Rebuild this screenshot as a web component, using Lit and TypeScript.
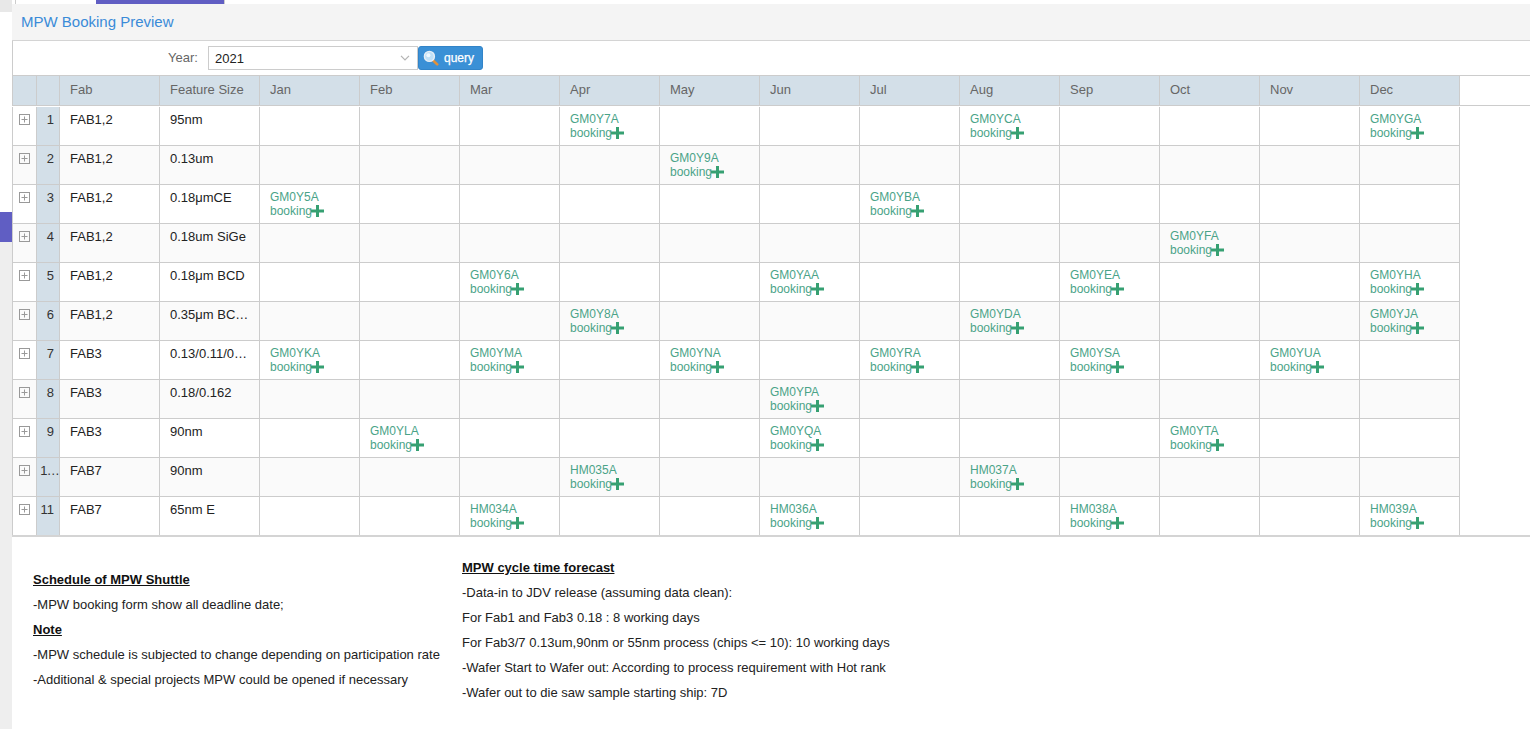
import { LitElement, html, css, svg } from "lit";
import { customElement } from "lit/decorators.js";

const MONTHS = ["Jan", "Feb", "Mar", "Apr", "May", "Jun", "Jul", "Aug", "Sep", "Oct", "Nov", "Dec"];

interface Row {
  no: string;
  fab: string;
  size: string;
  codes: Record<string, string>;
}

const ROWS: Row[] = [
  { no: "1", fab: "FAB1,2", size: "95nm", codes: { Apr: "GM0Y7A", Aug: "GM0YCA", Dec: "GM0YGA" } },
  { no: "2", fab: "FAB1,2", size: "0.13um", codes: { May: "GM0Y9A" } },
  { no: "3", fab: "FAB1,2", size: "0.18μmCE", codes: { Jan: "GM0Y5A", Jul: "GM0YBA" } },
  { no: "4", fab: "FAB1,2", size: "0.18um SiGe", codes: { Oct: "GM0YFA" } },
  { no: "5", fab: "FAB1,2", size: "0.18μm BCD", codes: { Mar: "GM0Y6A", Jun: "GM0YAA", Sep: "GM0YEA", Dec: "GM0YHA" } },
  { no: "6", fab: "FAB1,2", size: "0.35μm BC…", codes: { Apr: "GM0Y8A", Aug: "GM0YDA", Dec: "GM0YJA" } },
  { no: "7", fab: "FAB3", size: "0.13/0.11/0…", codes: { Jan: "GM0YKA", Mar: "GM0YMA", May: "GM0YNA", Jul: "GM0YRA", Sep: "GM0YSA", Nov: "GM0YUA" } },
  { no: "8", fab: "FAB3", size: "0.18/0.162", codes: { Jun: "GM0YPA" } },
  { no: "9", fab: "FAB3", size: "90nm", codes: { Feb: "GM0YLA", Jun: "GM0YQA", Oct: "GM0YTA" } },
  { no: "1…", fab: "FAB7", size: "90nm", codes: { Apr: "HM035A", Aug: "HM037A" } },
  { no: "11", fab: "FAB7", size: "65nm E", codes: { Mar: "HM034A", Jun: "HM036A", Sep: "HM038A", Dec: "HM039A" } },
];

const expander = svg`<svg class="exp" width="12" height="12" viewBox="0 0 12 12"><rect x="0.5" y="0.5" width="10" height="10" fill="none" stroke="#999"/><path d="M2.5 5.5h6M5.5 2.5v6" stroke="#999" fill="none"/></svg>`;
const plus = svg`<svg class="plus" width="13" height="12" viewBox="0 0 13 12"><path d="M5 0h3v4.5h5v3H8V12H5V7.5H0v-3h5z" fill="#36a072"/></svg>`;
const chevron = svg`<svg width="10" height="6" viewBox="0 0 10 6"><path d="M1 .8 5 5 9 .8" fill="none" stroke="#b4b4b4" stroke-width="1.2"/></svg>`;
const lens = svg`<svg width="16" height="16" viewBox="0 0 16 16"><path d="M9.6 9.8 14.2 14.4" stroke="#e0913a" stroke-width="2.6" stroke-linecap="round"/><circle cx="6.4" cy="6.4" r="5" fill="#bfe0f7" stroke="#e6eef5" stroke-width="1.4"/><circle cx="5.4" cy="5.2" r="2" fill="#eef8ff"/></svg>`;

@customElement("app-root")
export class AppRoot extends LitElement {
  static styles = css`
    :host {
      display: flex;
      width: 100%;
      height: 729px;
      overflow: hidden;
      background: #fff;
      font-family: "Liberation Sans", Arial, sans-serif;
      font-size: 13px;
      color: #333;
    }
    .side {
      width: 12px;
      flex: none;
      display: flex;
      flex-direction: column;
    }
    .side-top { height: 12px; background: #e8e8e8; }
    .side-gap { height: 200px; background: #fff; }
    .side-mark { height: 30px; background: #605ec3; }
    .side-rest { flex: 1; background: #eee; }
    .main { flex: 1; min-width: 0; display: flex; flex-direction: column; }
    .tabs { height: 4px; flex: none; display: flex; padding-left: 3px; background: #fff; }
    .tab-a { width: 80px; border-left: 1px solid #ccc; }
    .tab-b { width: 128px; background: #605ec3; border-right: 1px solid #ccc; }
    .title {
      height: 37px;
      flex: none;
      box-sizing: border-box;
      background: #f4f4f4;
      border-bottom: 1px solid #d4d4d4;
      padding-left: 9px;
      font-size: 15px;
      line-height: 36px;
      color: #3a8bd8;
    }
    .bar {
      height: 34px;
      flex: none;
      box-sizing: border-box;
      border-left: 1px solid #ccc;
      display: flex;
      align-items: flex-start;
      padding: 5px 0 0 155px;
    }
    .bar label { color: #666; line-height: 24px; width: 40px; }
    .combo {
      box-sizing: border-box;
      width: 210px;
      height: 24px;
      border: 1px solid #ccc;
      display: flex;
      align-items: center;
      justify-content: space-between;
      padding: 0 7px 0 6px;
      color: #222;
    }
    .btn {
      box-sizing: border-box;
      width: 65px;
      height: 24px;
      border-radius: 3px;
      background: #3a90d6;
      border: 1px solid #3284c8;
      display: flex;
      align-items: center;
      gap: 5px;
      padding-left: 4px;
      color: #fff;
      font-size: 12px;
      -webkit-text-stroke: 0.25px #fff;
    }
    .btn svg { flex: none; }
    .table { flex: none; border-bottom: 2px solid #d4d4d4; border-top: 1px solid #ccc; }
    .grid {
      display: grid;
      grid-template-columns: 24px 23px 100px 100px repeat(12, 100px);
      border-left: 1px solid #ccc;
    }
    .hrow { border-bottom: 1px solid #ccc; margin-bottom: 1px; }
    .hc {
      box-sizing: border-box;
      height: 29px;
      background: #d3dfe8;
      border-right: 1px solid #ccc;
      padding-left: 10px;
      line-height: 28px;
      color: #666;
    }
    .c {
      box-sizing: border-box;
      height: 39px;
      border-right: 1px solid #ccc;
      border-bottom: 1px solid #ccc;
      padding: 5px 0 0 10px;
      line-height: 16px;
      color: #222;
      white-space: nowrap;
      overflow: hidden;
    }
    .row-alt .c { background: #fafafa; }
    .grid.last .c { border-bottom: none; height: 38px; }
    .c.e { padding: 7px 0 0 6px; }
    .exp { display: block; }
    .c.n {
      background: #d3dfe8;
      padding: 5px 5px 0 0;
      text-align: right;
      color: #333;
    }
    .row-alt .c.n { background: #d3dfe8; }
    .c.n.clip { padding: 5px 0 0 0; letter-spacing: -0.8px; }
    .code {
      display: block;
      font-size: 12px;
      line-height: 15px;
      color: #4aa388;
      margin-top: -0.5px;
    }
    .booking { display: flex; align-items: center; }
    .plus { display: block; margin: -2px 0 0 -1px; }
    .notes {
      display: flex;
      padding: 18px 0 0 21px;
      font-size: 13px;
      line-height: 25px;
      color: #222;
    }
    .notes p { margin: 0; }
    .notes .h { font-weight: bold; text-decoration: underline; color: #111; }
    .left { width: 429px; flex: none; padding-top: 12px; }
  `;

  render() {
    return html`
      <div class="side">
        <div class="side-top"></div>
        <div class="side-gap"></div>
        <div class="side-mark"></div>
        <div class="side-rest"></div>
      </div>
      <div class="main">
        <div class="tabs"><div class="tab-a"></div><div class="tab-b"></div></div>
        <div class="title">MPW Booking Preview</div>
        <div class="bar">
          <label>Year:</label>
          <div class="combo"><span>2021</span>${chevron}</div>
          <div class="btn">${lens}<span>query</span></div>
        </div>
        <div class="table">
          <div class="hrow">
            <div class="grid">
              <div class="hc"></div>
              <div class="hc"></div>
              <div class="hc">Fab</div>
              <div class="hc">Feature Size</div>
              ${MONTHS.map((m) => html`<div class="hc">${m}</div>`)}
            </div>
          </div>
          ${ROWS.map(
            (r, i) => html`
              <div class="grid ${i % 2 ? "row-alt" : ""} ${i === ROWS.length - 1 ? "last" : ""}">
                <div class="c e">${expander}</div>
                <div class="c n ${r.no === "1…" ? "clip" : ""}">${r.no}</div>
                <div class="c">${r.fab}</div>
                <div class="c">${r.size}</div>
                ${MONTHS.map((m) => {
                  const code = r.codes[m];
                  return html`<div class="c">
                    ${code
                      ? html`<span class="code">${code}</span><span class="code booking">booking${plus}</span>`
                      : ""}
                  </div>`;
                })}
              </div>
            `
          )}
        </div>
        <div class="notes">
          <div class="left">
            <p class="h">Schedule of MPW Shuttle</p>
            <p>-MPW booking form show all deadline date;</p>
            <p class="h">Note</p>
            <p>-MPW schedule is subjected to change depending on participation rate</p>
            <p>-Additional &amp; special projects MPW could be opened if necessary</p>
          </div>
          <div class="right">
            <p class="h">MPW cycle time forecast</p>
            <p>-Data-in to JDV release (assuming data clean):</p>
            <p>For Fab1 and Fab3 0.18 : 8 working days</p>
            <p>For Fab3/7 0.13um,90nm or 55nm process (chips &lt;= 10): 10 working days</p>
            <p>-Wafer Start to Wafer out: According to process requirement with Hot rank</p>
            <p>-Wafer out to die saw sample starting ship: 7D</p>
          </div>
        </div>
      </div>
    `;
  }
}
